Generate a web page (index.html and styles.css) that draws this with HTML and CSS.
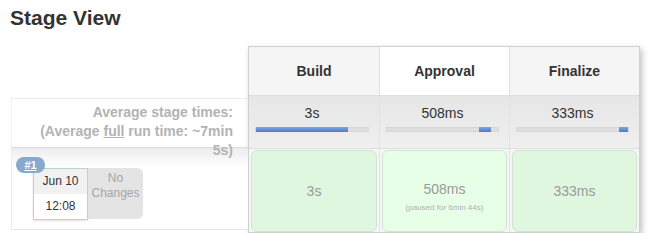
FILE: index.html
```html
<!DOCTYPE html>
<html lang="en">
<head>
    <meta charset="UTF-8">
    <meta name="viewport" content="width=device-width, initial-scale=1.0">
    <title>Stage View</title>
    <link rel="stylesheet" href="styles.css">
</head>
<body>
    <h2 class="title">Stage View</h2>
    <div class="stage-view">
        <div class="run-labels">
            <div class="header-spacer"></div>
            <div class="avg-label">
                Average stage times:<br>
                (Average <u>full</u> run time: ~7min 5s)
            </div>
            <div class="run-label">
                <span class="badge">#1</span>
                <div class="run-date">
                    <div class="day">Jun 10</div>
                    <div class="time">12:08</div>
                </div>
                <div class="changes">No<br>Changes</div>
            </div>
        </div>

        <div class="stage-table">
            <div class="row headers">
                <div class="col head">Build</div>
                <div class="col head light">Approval</div>
                <div class="col head">Finalize</div>
            </div>
            <div class="row averages">
                <div class="col avg">
                    <div>3s</div>
                    <div class="bar"><span style="left: 0; width: 82%"></span></div>
                </div>
                <div class="col avg">
                    <div>508ms</div>
                    <div class="bar"><span style="left: 83%; width: 11%"></span></div>
                </div>
                <div class="col avg">
                    <div>333ms</div>
                    <div class="bar"><span style="left: 92%; width: 8%"></span></div>
                </div>
            </div>
            <div class="row builds">
                <div class="col"><div class="cell">3s</div></div>
                <div class="col"><div class="cell paused">508ms<small>(paused for 6min 44s)</small></div></div>
                <div class="col"><div class="cell">333ms</div></div>
            </div>
        </div>
    </div>
</body>
</html>
```

FILE: styles.css
```css
:root {
    --text-color: #333333;
    --text-muted: #a8a8a8;
    --line-color: #e2e2e2;
    --cell-green: #dff7df;
    --cell-green-light: #e6ffe6;
}

* {
    margin: 0;
    padding: 0;
    box-sizing: border-box;
}

body {
    font-family: 'Liberation Sans', Arial, sans-serif;
    color: var(--text-color);
    background-color: #ffffff;
    padding: 0 10px;
}

.title {
    font-size: 21px;
    line-height: 24px;
    font-weight: bold;
    margin: 6px 0 16px;
}

.stage-view {
    display: flex;
    align-items: flex-start;
}

/* left column: averages label + build label */
.run-labels {
    width: 238px;
    padding-left: 1px;
}

.header-spacer {
    height: 52px;
}

.avg-label {
    position: relative;
    z-index: 2;
    height: 49px;
    border-top: 1px solid #ececec;
    border-left: 1px solid #f2f2f2;
    padding: 4px 15px 0 22px;
    text-align: right;
    font-size: 14px;
    line-height: 19px;
    font-weight: bold;
    color: #b3b3b3;
}

.run-label {
    position: relative;
    height: 83px;
    border-top: 1px solid #dcdcdc;
    border-bottom: 1px solid #e6e6e6;
    border-left: 1px solid #ececec;
    background: linear-gradient(#ececec, #ffffff 18px);
    padding: 20px 0 0 21px;
    display: flex;
    align-items: flex-start;
}

.badge {
    position: absolute;
    left: 4px;
    top: 9px;
    width: 29px;
    height: 16px;
    border-radius: 8px;
    background-color: #88a8cd;
    color: #ffffff;
    font-size: 11px;
    line-height: 16px;
    font-weight: bold;
    text-align: center;
    text-decoration: underline;
    z-index: 1;
}

.run-date {
    width: 55px;
    border: 1px solid #b8d6c5;
    font-size: 12px;
    text-align: center;
    box-shadow: 0 1px 2px rgba(0, 0, 0, 0.12);
}

.run-date .day {
    height: 25px;
    line-height: 25px;
    background-color: #f1f1f1;
}

.run-date .time {
    height: 25px;
    line-height: 25px;
    background-color: #ffffff;
}

.changes {
    width: 55px;
    height: 51px;
    background-color: #e4e4e4;
    border-radius: 0 6px 6px 0;
    color: #a5a5a5;
    font-size: 12px;
    line-height: 15px;
    text-align: center;
    padding-top: 3px;
}

/* stage table */
.stage-table {
    width: 392px;
    border: 1px solid #cfcfcf;
    box-shadow: 2px 3px 6px rgba(0, 0, 0, 0.25);
    background-color: #ffffff;
}

.row {
    display: flex;
}

.col {
    width: 130px;
    border-left: 1px solid var(--line-color);
}

.col:first-child {
    border-left: none;
}

.headers {
    height: 48px;
}

.head {
    background-color: #f5f5f5;
    font-size: 14px;
    font-weight: bold;
    display: flex;
    align-items: center;
    justify-content: center;
}

.head.light {
    background-color: #ffffff;
}

.averages {
    height: 53px;
    border-top: 1px solid #dedede;
}

.avg {
    background: linear-gradient(#e6e6e6, #efefef);
    text-align: center;
    font-size: 14px;
    line-height: 17px;
    padding: 9px 10px 0 6px;
}

.bar {
    position: relative;
    height: 5px;
    margin-top: 5px;
    background-color: #dedede;
    border: 1px solid #d6d6d6;
}

.bar span {
    position: absolute;
    top: -1px;
    height: 5px;
    background: linear-gradient(#7fa6e0, #4a7ccc);
}

.builds {
    height: 84px;
    border-top: 1px solid #dedede;
    background-color: #f6f6f6;
}

.builds .col {
    padding: 1px 2px 0;
}

.cell {
    height: 82px;
    border: 1px solid #d3e3d3;
    border-radius: 6px;
    background-color: var(--cell-green);
    color: #9a9a9a;
    font-size: 14px;
    display: flex;
    flex-direction: column;
    align-items: center;
    justify-content: center;
}

.cell.paused {
    background-color: var(--cell-green-light);
    padding-top: 10px;
}

.cell small {
    font-size: 8px;
    color: #b0b0b0;
    margin-top: 6px;
}
```
